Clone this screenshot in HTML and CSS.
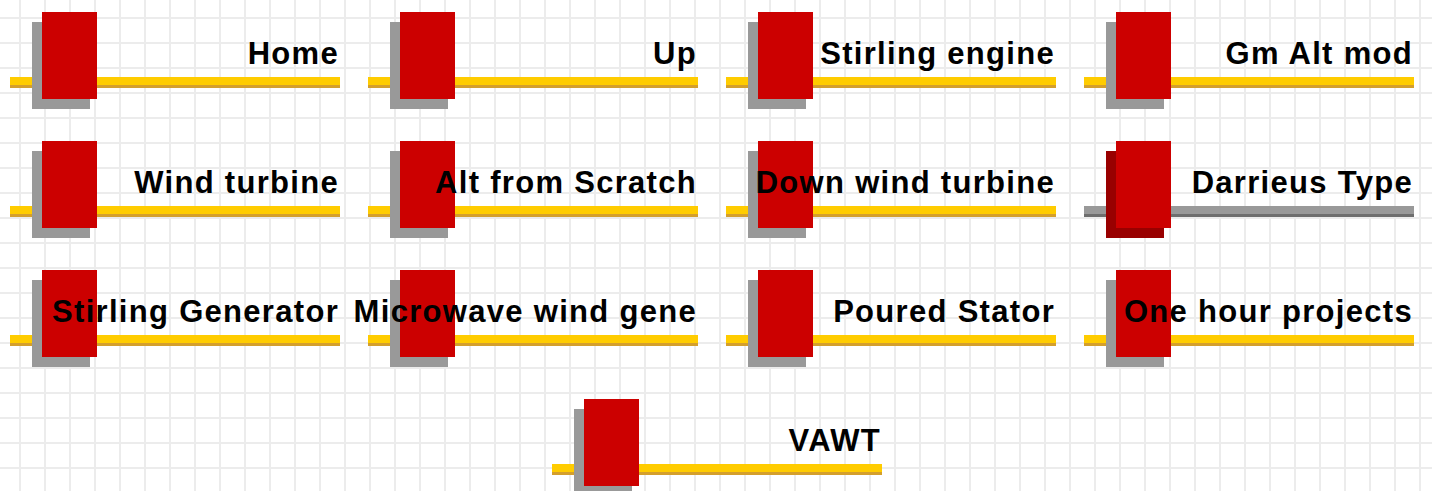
FILE: index.html
```html
<!DOCTYPE html>
<html lang="en">
<head>
  <meta charset="UTF-8" />
  <title>Navigation</title>
  <link rel="stylesheet" href="styles.css">
</head>
<body>
  <nav class="menu">
    <a class="item" href="#"><span class="label"><span>Home</span></span><span class="bar"></span><span class="knob"></span></a>
    <a class="item" href="#"><span class="label"><span>Up</span></span><span class="bar"></span><span class="knob"></span></a>
    <a class="item" href="#"><span class="label"><span>Stirling engine</span></span><span class="bar"></span><span class="knob"></span></a>
    <a class="item" href="#"><span class="label"><span>Gm Alt mod</span></span><span class="bar"></span><span class="knob"></span></a>

    <a class="item" href="#"><span class="label"><span>Wind turbine</span></span><span class="bar"></span><span class="knob"></span></a>
    <a class="item" href="#"><span class="label"><span>Alt from Scratch</span></span><span class="bar"></span><span class="knob"></span></a>
    <a class="item" href="#"><span class="label"><span>Down wind turbine</span></span><span class="bar"></span><span class="knob"></span></a>
    <a class="item current" href="#"><span class="label"><span>Darrieus Type</span></span><span class="bar"></span><span class="knob"></span></a>

    <a class="item" href="#"><span class="label"><span>Stirling Generator</span></span><span class="bar"></span><span class="knob"></span></a>
    <a class="item" href="#"><span class="label"><span>Microwave wind gene</span></span><span class="bar"></span><span class="knob"></span></a>
    <a class="item" href="#"><span class="label"><span>Poured Stator</span></span><span class="bar"></span><span class="knob"></span></a>
    <a class="item" href="#"><span class="label"><span>One hour projects</span></span><span class="bar"></span><span class="knob"></span></a>

    <div class="last-row">
      <a class="item" href="#"><span class="label"><span>VAWT</span></span><span class="bar"></span><span class="knob"></span></a>
    </div>
  </nav>
</body>
</html>
```

FILE: styles.css
```css
html, body {
  height: 100%;
  overflow: hidden;
}

body {
  margin: 0;
  padding: 12px 0 0 10px;
  box-sizing: border-box;
  font-family: "Liberation Sans", Arial, sans-serif;
  background-color: #fff;
  background-image:
    linear-gradient(to right, #ececec 2px, transparent 2px),
    linear-gradient(to bottom, #ececec 2px, transparent 2px);
  background-size: 25px 25px;
  background-position: 19px 0, 0 17px;
}

.menu {
  display: grid;
  grid-template-columns: repeat(4, 330px);
  column-gap: 28px;
  row-gap: 19px;
}

.last-row {
  grid-column: 1 / -1;
  display: flex;
  justify-content: center;
  padding-left: 10px;
}

.item {
  position: relative;
  display: flex;
  flex-direction: column;
  width: 330px;
  height: 110px;
  color: #000;
  text-decoration: none;
}

.label {
  position: relative;
  z-index: 2;
  display: flex;
  justify-content: flex-end;
  margin-top: 24px;
  padding-right: 1px;
  height: 36px;
  line-height: 36px;
  font-size: 31px;
  font-weight: bold;
  letter-spacing: 1.3px;
  white-space: nowrap;
}

.bar {
  display: block;
  margin-top: 5px;
  height: 8px;
  background: #ffcc00;
  border-bottom: 3px solid #d49f2c;
}

/* knob = shadow block + red face, sits over the bar */
.knob {
  position: absolute;
  z-index: 1;
  left: 22px;
  top: 0;
  width: 75px;
  height: 97px;
}

.knob::before,
.knob::after {
  content: "";
  position: absolute;
  height: 87px;
}

.knob::before {
  left: 0;
  top: 10px;
  width: 58px;
  background: #999;
}

.knob::after {
  left: 10px;
  top: 0;
  width: 55px;
  background: #cc0000;
}

.current .bar {
  background: #999;
  border-bottom-color: #6e6e6e;
}

.current .knob::before {
  background: #990000;
}
```
